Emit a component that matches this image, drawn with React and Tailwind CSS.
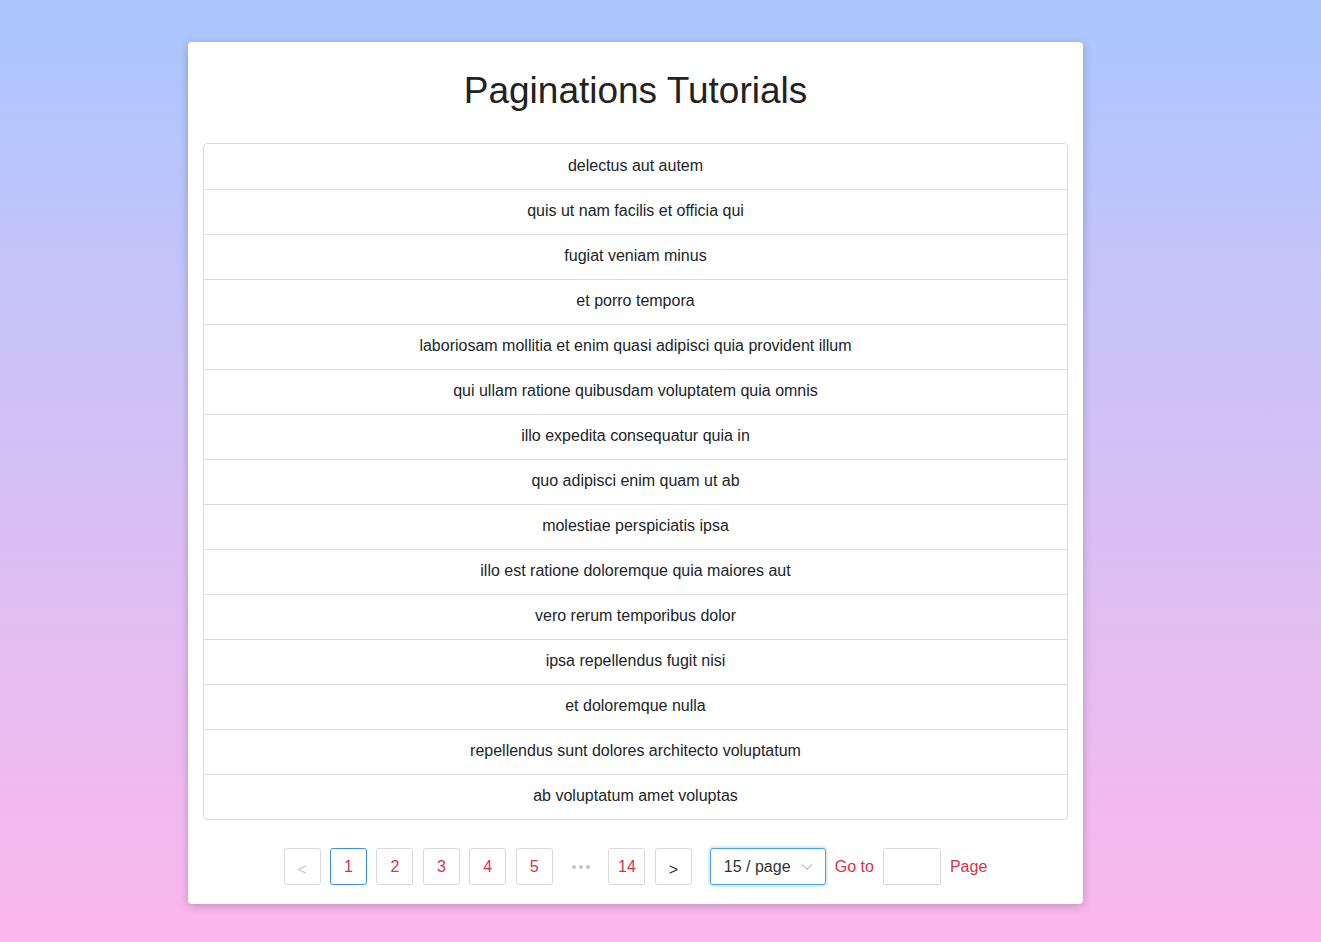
import React from "react";

const items = [
  "delectus aut autem",
  "quis ut nam facilis et officia qui",
  "fugiat veniam minus",
  "et porro tempora",
  "laboriosam mollitia et enim quasi adipisci quia provident illum",
  "qui ullam ratione quibusdam voluptatem quia omnis",
  "illo expedita consequatur quia in",
  "quo adipisci enim quam ut ab",
  "molestiae perspiciatis ipsa",
  "illo est ratione doloremque quia maiores aut",
  "vero rerum temporibus dolor",
  "ipsa repellendus fugit nisi",
  "et doloremque nulla",
  "repellendus sunt dolores architecto voluptatum",
  "ab voluptatum amet voluptas",
];

function PageBtn({ children, active }) {
  return (
    <div
      className={`w-[37px] h-[37px] flex items-center justify-center rounded-[3px] border bg-white text-[16px] text-[#d6334a] ${
        active ? "border-[#3a8ee6]" : "border-[#d9d9d9]"
      }`}
    >
      {children}
    </div>
  );
}

export default function App() {
  return (
    <div
      className="min-h-[942px] w-full pt-[42px] bg-gradient-to-b from-[#a9c7fe] to-[#fbb7ec] text-[#212529]"
      style={{ fontFamily: '"Liberation Sans", Arial, sans-serif' }}
    >
      <div className="ml-[188px] w-[895px] bg-white rounded-[4px] shadow-[0_2px_10px_rgba(0,0,0,0.22)] px-[15px] pb-[19px]">
        <h1 className="pt-[25px] pb-[28px] text-center text-[37px] leading-[48px] font-normal text-[#222]">
          Paginations Tutorials
        </h1>
        <div className="border border-[#dcdcdc] rounded-[4px]">
          {items.map((t, i) => (
            <div
              key={i}
              className={`h-[45px] flex items-center justify-center text-[16px] text-[#212529] ${
                i > 0 ? "border-t border-[#dcdcdc]" : ""
              }`}
            >
              <span className="-translate-y-[1px]">{t}</span>
            </div>
          ))}
        </div>
        <div className="mt-[28px] flex items-center justify-center">
          <div className="flex items-center gap-[9.4px]">
            <div className="w-[37px] h-[37px] flex items-center justify-center rounded-[3px] border border-[#d9d9d9] bg-white text-[16px] text-[#c8c8c8]">
              <span className="translate-y-[3px]">&lt;</span>
            </div>
            <PageBtn active>1</PageBtn>
            <PageBtn>2</PageBtn>
            <PageBtn>3</PageBtn>
            <PageBtn>4</PageBtn>
            <PageBtn>5</PageBtn>
            <div className="w-[37px] h-[37px] flex items-center justify-center gap-[3px]">
              <span className="w-[4px] h-[4px] rounded-full bg-[#c4c4c4]" />
              <span className="w-[4px] h-[4px] rounded-full bg-[#c4c4c4]" />
              <span className="w-[4px] h-[4px] rounded-full bg-[#c4c4c4]" />
            </div>
            <PageBtn>14</PageBtn>
            <div className="w-[37px] h-[37px] flex items-center justify-center rounded-[3px] border border-[#d9d9d9] bg-white text-[16px] text-[#333]">
              <span className="translate-y-[3px]">&gt;</span>
            </div>
          </div>
          <div className="ml-[18px] w-[116px] h-[37px] flex items-center justify-between pl-[13px] pr-[12px] rounded-[3px] border border-[#4aa0f0] shadow-[0_0_0_2px_rgba(24,144,255,0.15)] bg-white text-[16px] text-[#333]">
            <span>15 / page</span>
            <svg width="12" height="8" viewBox="0 0 12 8" fill="none">
              <path d="M1 1.5 L6 6.5 L11 1.5" stroke="#c0c0c0" strokeWidth="1.2" />
            </svg>
          </div>
          <span className="ml-[9px] text-[16px] text-[#d6334a]">Go to</span>
          <div className="ml-[9px] w-[58px] h-[37px] rounded-[3px] border border-[#d9d9d9] bg-white" />
          <span className="ml-[9px] text-[16px] text-[#d6334a]">Page</span>
        </div>
      </div>
    </div>
  );
}
